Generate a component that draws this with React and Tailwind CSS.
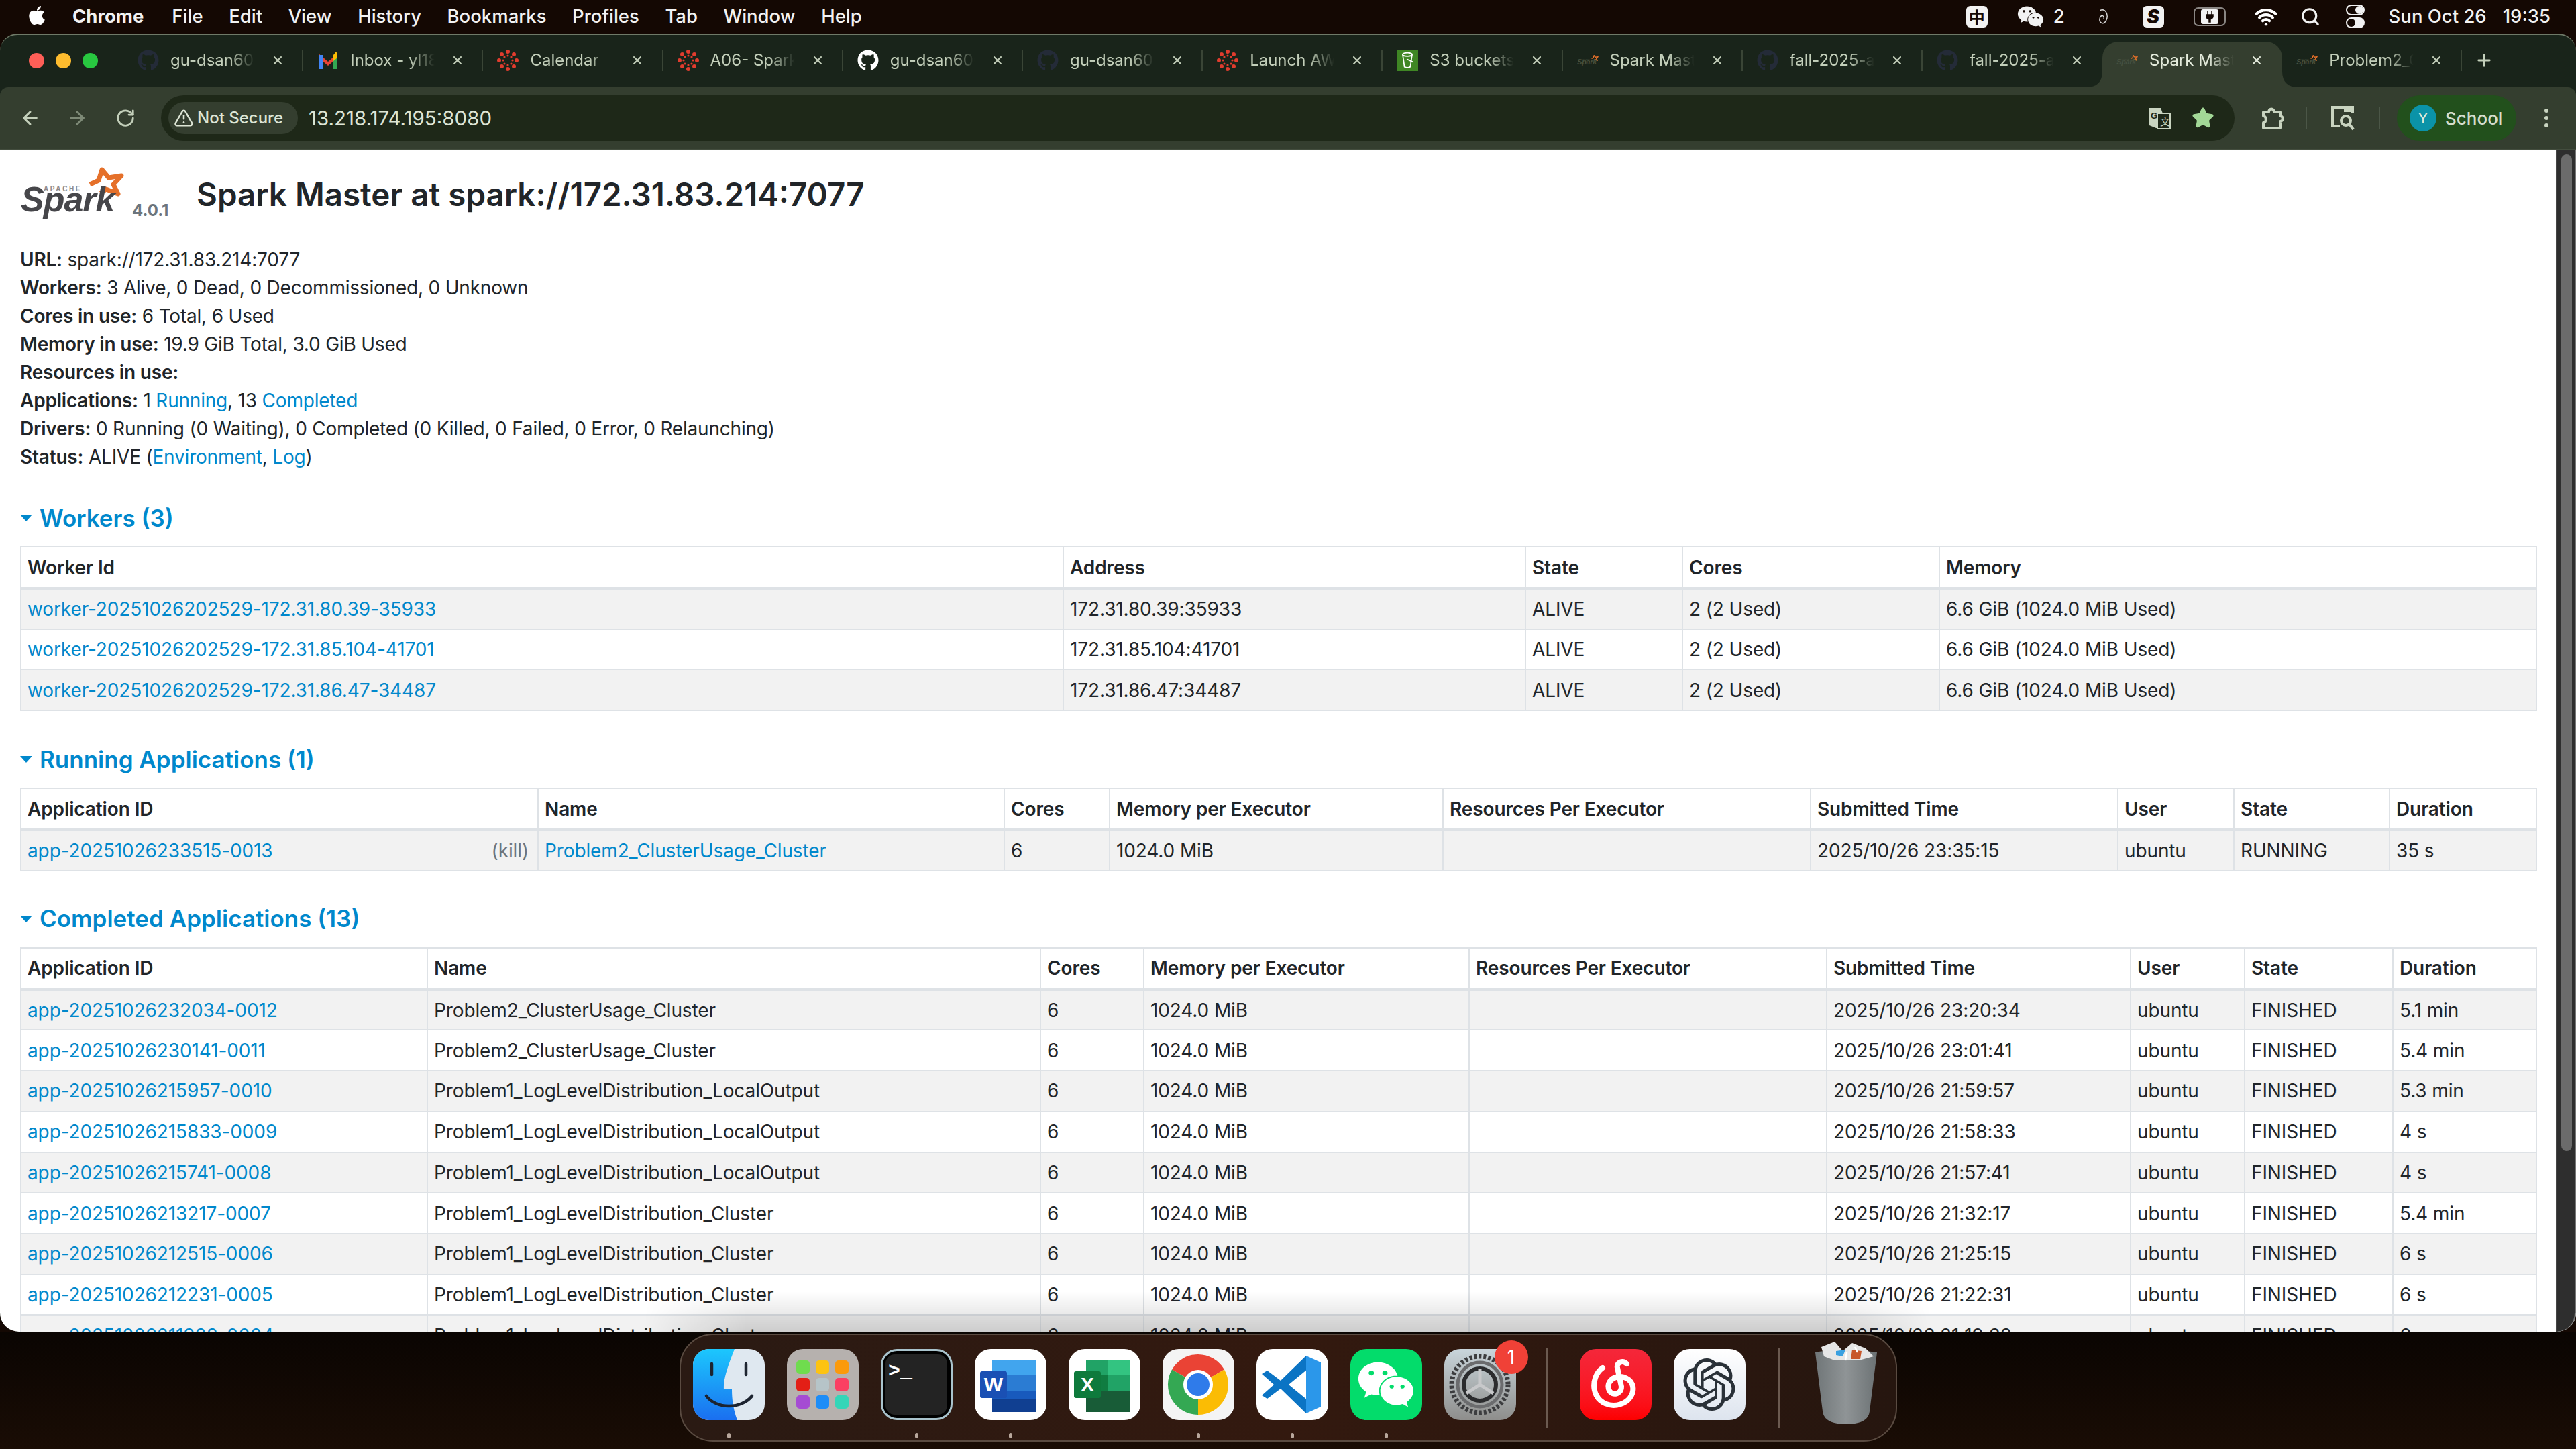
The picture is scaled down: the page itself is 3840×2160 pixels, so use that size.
import React from 'react';
import { ArrowLeft, ArrowRight, RotateCw, TriangleAlert, Star, Search, Plus, X, Wifi } from 'lucide-react';
import { FaApple, FaGithub, FaWeixin } from 'react-icons/fa';
import { SiOpenai } from 'react-icons/si';

const font = 'font-["Inter","Liberation_Sans",sans-serif]';

const SparkLogo = ({ className, dim }) => (
  <svg viewBox="0 0 155 80" className={className}>
    <path d="M104 27 L117 21 L122 5 L132 17 L151 14 L139 27 L146 41 L128 34 L120 40" fill="none" stroke="#e5702a" strokeWidth="7" strokeLinejoin="round" />
    <text x="35" y="37" fontFamily="Liberation Sans" fontWeight="700" fontSize="10" fill={dim ? '#46503f' : '#88898b'} letterSpacing="2.6">APACHE</text>
    <text x="1" y="67" fontFamily="Liberation Sans" fontStyle="italic" fontWeight="700" fontSize="52" fill={dim ? '#46503f' : '#46464a'} letterSpacing="-1">Spark</text>
  </svg>
);

const CanvasIcon = () => (
  <svg viewBox="0 0 32 32" className="w-[32px] h-[32px]">
    <g fill="#e13c2e">
      <circle cx="16" cy="3" r="3" /><circle cx="16" cy="29" r="3" /><circle cx="3" cy="16" r="3" /><circle cx="29" cy="16" r="3" />
      <circle cx="7" cy="7" r="3" /><circle cx="25" cy="7" r="3" /><circle cx="7" cy="25" r="3" /><circle cx="25" cy="25" r="3" />
      <circle cx="16" cy="9" r="1.6" /><circle cx="16" cy="23" r="1.6" /><circle cx="9" cy="16" r="1.6" /><circle cx="23" cy="16" r="1.6" />
      <circle cx="11" cy="11" r="1.6" /><circle cx="21" cy="11" r="1.6" /><circle cx="11" cy="21" r="1.6" /><circle cx="21" cy="21" r="1.6" />
    </g>
  </svg>
);

const GmailIcon = () => (
  <svg viewBox="0 0 32 32" className="w-[32px] h-[32px]">
    <path d="M2 6 L16 18 L30 6 V12 L16 24 L2 12 Z" fill="#ea4335" />
    <path d="M2 8 H8 V29 H2 Z" fill="#4285f4" />
    <path d="M24 8 H30 V29 H24 Z" fill="#34a853" />
    <path d="M24 8 L28 3 L30 6 V12 L24 17 Z" fill="#fbbc04" />
  </svg>
);

const S3Icon = () => (
  <div className="w-[32px] h-[32px] bg-[#3f8624] flex items-center justify-center">
    <svg viewBox="0 0 24 32" className="w-[22px] h-[28px]" fill="none" stroke="#fff" strokeWidth="2">
      <ellipse cx="12" cy="6" rx="8" ry="3" />
      <path d="M4 6 L7 27 Q12 30 17 27 L20 6" />
      <path d="M11 14 L22 19" />
    </svg>
  </div>
);

const Favicon = ({ type }) => {
  if (type === 'github') return <FaGithub className="w-[32px] h-[32px] text-[#242b38]" />;
  if (type === 'githubw') return <FaGithub className="w-[32px] h-[32px] text-white" />;
  if (type === 'gmail') return <GmailIcon />;
  if (type === 'canvas') return <CanvasIcon />;
  if (type === 's3') return <S3Icon />;
  return <SparkLogo className="w-[34px] h-[32px]" dim />;
};

const tabs = [
  { icon: 'github', title: 'gu-dsan6000' },
  { icon: 'gmail', title: 'Inbox - yl1883' },
  { icon: 'canvas', title: 'Calendar' },
  { icon: 'canvas', title: 'A06- Spark' },
  { icon: 'githubw', title: 'gu-dsan6000' },
  { icon: 'github', title: 'gu-dsan6000' },
  { icon: 'canvas', title: 'Launch AWS' },
  { icon: 's3', title: 'S3 buckets' },
  { icon: 'spark', title: 'Spark Master' },
  { icon: 'github', title: 'fall-2025-a06' },
  { icon: 'github', title: 'fall-2025-a06' },
  { icon: 'spark', title: 'Spark Master', active: true },
  { icon: 'spark', title: 'Problem2_Cluster' },
];

const Tab = ({ tab, hideSep }) => (
  <div className={`relative h-[68px] w-[268.2px] shrink-0 flex items-center pl-[21px] pb-[12px] ${tab.active ? 'bg-[#343e2f] rounded-t-[24px] z-10' : ''}`}>
    {tab.active && (
      <>
        <svg viewBox="0 0 24 24" className="absolute left-[-24px] bottom-0 w-[24px] h-[24px]"><path d="M24 0 V24 H0 Q24 24 24 0 Z" fill="#343e2f" /></svg>
        <svg viewBox="0 0 24 24" className="absolute right-[-24px] bottom-0 w-[24px] h-[24px]"><path d="M0 0 V24 H24 Q0 24 0 0 Z" fill="#343e2f" /></svg>
      </>
    )}
    <div className="w-[32px] h-[32px] shrink-0 flex items-center justify-center"><Favicon type={tab.icon} /></div>
    <span className={`ml-[17px] w-[126px] overflow-hidden whitespace-nowrap text-[24px] leading-[32px] [mask-image:linear-gradient(to_right,black_70%,transparent)] ${tab.active ? 'text-[#e4ebdc]' : 'text-[#c3cfba]'}`}>{tab.title}</span>
    <X className={`ml-[24px] w-[20px] h-[20px] shrink-0 ${tab.active ? 'text-[#e4ebdc]' : 'text-[#c3cfba]'}`} strokeWidth={2.5} />
    {!tab.active && !hideSep && <div className="absolute right-0 top-[12px] w-[2px] h-[32px] bg-[#3a4536]" />}
  </div>
);

const TabStrip = () => (
  <div className="h-[78px] flex items-end relative">
    <div className="flex items-center gap-[17px] pl-[43px] w-[184px] shrink-0 h-[68px] pb-[12px]">
      <div className="w-[23px] h-[23px] rounded-full bg-[#fe5f57]" />
      <div className="w-[23px] h-[23px] rounded-full bg-[#febc2e]" />
      <div className="w-[23px] h-[23px] rounded-full bg-[#28c840]" />
    </div>
    {tabs.map((tab, i) => (
      <Tab key={i} tab={tab} hideSep={i === 10} />
    ))}
    <div className="h-[68px] pb-[12px] flex items-center pl-[19px]">
      <Plus className="w-[28px] h-[28px] text-[#c3cfba]" strokeWidth={2.5} />
    </div>
  </div>
);

const TranslateIcon = () => (
  <svg viewBox="0 0 34 34" className="w-[34px] h-[34px]">
    <path d="M2 2 H19 L30 32 H12 L2 28 Z" fill="#c9d4c0" />
    <rect x="14" y="10" width="19" height="23" fill="#1e2818" stroke="#c9d4c0" strokeWidth="2" />
    <text x="4" y="18" fontSize="13" fontWeight="700" fontFamily="Liberation Sans" fill="#1e2818">G</text>
    <text x="18" y="28" fontSize="15" fontFamily="Noto Sans CJK SC" fill="#c9d4c0">文</text>
  </svg>
);

const PuzzleIcon = () => (
  <svg viewBox="0 0 34 34" className="w-[34px] h-[36px]" fill="none" stroke="#c9d4c0" strokeWidth="4" strokeLinejoin="round">
    <path d="M4 8 H12 C12 2 20 2 20 8 H29 V14 C34 14 34 22 29 22 V32 H4 V24 C9 24 9 14 4 14 Z" />
  </svg>
);

const LensIcon = () => (
  <svg viewBox="0 0 36 38" className="w-[36px] h-[38px]" fill="none" stroke="#c9d4c0" strokeWidth="4">
    <path d="M14 31 H3 V3 H33 V12" />
    <path d="M20 4 H33 V10 H20 Z" fill="#c9d4c0" stroke="none" />
    <circle cx="23" cy="23" r="7" />
    <path d="M28 28 L34 36" />
  </svg>
);

const Toolbar = () => (
  <div className="h-[92px] shrink-0 bg-[#343e2f] rounded-t-[12px] flex items-center text-[#c9d4c0]">
    <ArrowLeft className="ml-[29px] w-[32px] h-[32px] text-[#c3cfba]" strokeWidth={2.2} />
    <ArrowRight className="ml-[38px] w-[32px] h-[32px] text-[#7e8a77]" strokeWidth={2.2} />
    <RotateCw className="ml-[41px] w-[30px] h-[30px] text-[#c3cfba]" strokeWidth={2.2} />
    <div className="ml-[38px] w-[3091px] shrink-0 h-[68px] rounded-full bg-[#1e2818] flex items-center pl-[11px] pr-[30px]">
      <div className="h-[48px] w-[193px] rounded-full bg-[#343e2f] flex items-center pl-[8px] gap-[5px] shrink-0">
        <TriangleAlert className="w-[30px] h-[30px] text-[#dde5d5]" strokeWidth={2} />
        <span className="text-[24px] font-medium text-[#dde5d5] whitespace-nowrap">Not Secure</span>
      </div>
      <span className="ml-[16px] text-[29.5px] text-[#dde5d5]">13.218.174.195:8080</span>
      <div className="ml-auto flex items-center gap-[31px]">
        <TranslateIcon />
        <Star className="w-[34px] h-[34px] text-[#a3d897] fill-[#a3d897]" />
      </div>
    </div>
    <div className="ml-[39px] shrink-0"><PuzzleIcon /></div>
    <div className="ml-[33px] w-[2px] h-[32px] bg-[#4b5647] shrink-0" />
    <div className="ml-[35px] shrink-0"><LensIcon /></div>
    <div className="ml-[36px] w-[2px] h-[32px] bg-[#4b5647] shrink-0" />
    <div className="ml-[25px] h-[68px] w-[178px] shrink-0 rounded-full bg-[#22501c] flex items-center pl-[19px]">
      <div className="w-[40px] h-[40px] rounded-full bg-[#0b93a8] flex items-center justify-center text-[22px] text-[#e4ebdc]">Y</div>
      <span className="ml-[13px] text-[26px] font-medium text-[#d5ddcc]">School</span>
    </div>
    <div className="ml-[42px] flex flex-col gap-[5px] shrink-0">
      <div className="w-[6px] h-[6px] rounded-full bg-[#c9d4c0]" />
      <div className="w-[6px] h-[6px] rounded-full bg-[#c9d4c0]" />
      <div className="w-[6px] h-[6px] rounded-full bg-[#c9d4c0]" />
    </div>
  </div>
);

const menus = ['File', 'Edit', 'View', 'History', 'Bookmarks', 'Profiles', 'Tab', 'Window', 'Help'];

const MenuBar = () => (
  <div className="h-[50px] shrink-0 bg-[#140803] flex items-center text-[#f2f2f2] text-[27.5px] font-medium pl-[40px] pr-[38px]">
    <FaApple className="w-[30px] h-[32px] text-white mb-[4px]" />
    <span className="ml-[38px] font-bold">Chrome</span>
    <div className="ml-[42px] flex gap-[38.6px]">
      {menus.map((m) => <span key={m}>{m}</span>)}
    </div>
    <div className="ml-auto flex items-center">
      <div className="w-[32px] h-[32px] rounded-[6px] bg-[#f2f2f2] flex items-center justify-center text-[#140803] text-[24px] font-bold font-['Noto_Sans_CJK_SC']">中</div>
      <FaWeixin className="ml-[44px] w-[40px] h-[36px] text-[#f2f2f2]" />
      <span className="ml-[14px]">2</span>
      <svg viewBox="0 0 24 32" className="ml-[44px] w-[24px] h-[30px]" fill="none" stroke="#ddd" strokeWidth="1.5">
        <path d="M8 6 C18 2 22 14 18 22 C14 30 6 26 8 18 C10 12 16 14 14 20" />
      </svg>
      <div className="ml-[48px] w-[32px] h-[32px] rounded-[6px] bg-[#f2f2f2] flex items-center justify-center text-[#140803] text-[28px] font-black italic">S</div>
      <div className="ml-[44px] w-[48px] h-[28px] rounded-[7px] border-2 border-[#8a8683] flex items-center justify-center">
        <div className="w-[26px] h-[22px] rounded-[3px] bg-[#f2f2f2] flex items-center justify-center">
          <svg viewBox="0 0 12 16" className="w-[12px] h-[20px]"><path d="M3 0 V5 M9 0 V5 M1 5 H11 V8 C11 11 8 11 7 12 V16 H5 V12 C4 11 1 11 1 8 Z" stroke="#140803" strokeWidth="1.5" fill="#140803" /></svg>
        </div>
      </div>
      <Wifi className="ml-[42px] w-[36px] h-[34px] text-white" strokeWidth={3} />
      <Search className="ml-[33px] w-[30px] h-[30px] text-[#f2f2f2]" strokeWidth={2.5} />
      <div className="ml-[38px] w-[28px] h-[36px] flex flex-col gap-[3px]">
        <div className="h-[16px] rounded-full border-2 border-[#f2f2f2] flex justify-end"><div className="w-[12px] bg-[#f2f2f2] rounded-full" /></div>
        <div className="h-[16px] rounded-full bg-[#f2f2f2] flex"><div className="w-[12px] h-[12px] m-[2px] bg-[#140803] rounded-full" /></div>
      </div>
      <span className="ml-[36px] whitespace-nowrap">Sun Oct 26</span>
      <span className="ml-[24px]">19:35</span>
    </div>
  </div>
);

const A = ({ children }) => <a className="text-[#0088cc]">{children}</a>;

const info = [
  ['URL:', 'spark://172.31.83.214:7077'],
  ['Workers:', '3 Alive, 0 Dead, 0 Decommissioned, 0 Unknown'],
  ['Cores in use:', '6 Total, 6 Used'],
  ['Memory in use:', '19.9 GiB Total, 3.0 GiB Used'],
  ['Resources in use:', ''],
  ['Applications:', <>1 <A>Running</A>, 13 <A>Completed</A></>],
  ['Drivers:', '0 Running (0 Waiting), 0 Completed (0 Killed, 0 Failed, 0 Error, 0 Relaunching)'],
  ['Status:', <>ALIVE (<A>Environment</A>, <A>Log</A>)</>],
];

const Section = ({ title, className, children }) => (
  <section className={className}>
    <h4 className="h-[50px] flex items-center text-[#0088cc] text-[35px] font-semibold leading-none mb-[17px]">
      <svg viewBox="0 0 18 10" className="w-[18px] h-[10px] mr-[11px]"><path d="M0 0 H18 L9 10 Z" fill="#0088cc" /></svg>
      {title}
    </h4>
    {children}
  </section>
);

const Table = ({ widths, headers, rows }) => (
  <table className="w-[3750px] table-fixed border-collapse border-2 border-[#dee2e6] text-[28px] leading-[42px] tracking-[-0.12px] text-[#212529]">
    <colgroup>
      {widths.map((w, i) => <col key={i} style={{ width: w }} />)}
    </colgroup>
    <thead>
      <tr className="h-[62px] border-b-[4px] border-[#dee2e6]">
        {headers.map((h) => <th key={h} className="px-[9px] text-left font-semibold border-x-2 border-[#dee2e6]">{h}</th>)}
      </tr>
    </thead>
    <tbody>
      {rows.map((row, i) => (
        <tr key={i} className={`h-[60.7px] border-b-2 border-[#dee2e6] ${i % 2 === 0 ? 'bg-[#f2f2f2]' : 'bg-white'}`}>
          {row.map((c, j) => <td key={j} className="px-[9px] whitespace-nowrap overflow-hidden border-x-2 border-[#dee2e6]">{c}</td>)}
        </tr>
      ))}
    </tbody>
  </table>
);

const workerRows = [
  ['worker-20251026202529-172.31.80.39-35933', '172.31.80.39:35933'],
  ['worker-20251026202529-172.31.85.104-41701', '172.31.85.104:41701'],
  ['worker-20251026202529-172.31.86.47-34487', '172.31.86.47:34487'],
].map(([id, addr]) => [<A>{id}</A>, addr, 'ALIVE', '2 (2 Used)', '6.6 GiB (1024.0 MiB Used)']);

const completed = [
  ['app-20251026232034-0012', 'Problem2_ClusterUsage_Cluster', '2025/10/26 23:20:34', '5.1 min'],
  ['app-20251026230141-0011', 'Problem2_ClusterUsage_Cluster', '2025/10/26 23:01:41', '5.4 min'],
  ['app-20251026215957-0010', 'Problem1_LogLevelDistribution_LocalOutput', '2025/10/26 21:59:57', '5.3 min'],
  ['app-20251026215833-0009', 'Problem1_LogLevelDistribution_LocalOutput', '2025/10/26 21:58:33', '4 s'],
  ['app-20251026215741-0008', 'Problem1_LogLevelDistribution_LocalOutput', '2025/10/26 21:57:41', '4 s'],
  ['app-20251026213217-0007', 'Problem1_LogLevelDistribution_Cluster', '2025/10/26 21:32:17', '5.4 min'],
  ['app-20251026212515-0006', 'Problem1_LogLevelDistribution_Cluster', '2025/10/26 21:25:15', '6 s'],
  ['app-20251026212231-0005', 'Problem1_LogLevelDistribution_Cluster', '2025/10/26 21:22:31', '6 s'],
  ['app-20251026211933-0004', 'Problem1_LogLevelDistribution_Cluster', '2025/10/26 21:19:33', '6 s'],
].map(([id, name, time, dur]) => [<A>{id}</A>, name, '6', '1024.0 MiB', '', time, 'ubuntu', 'FINISHED', dur]);

const appHeaders = ['Application ID', 'Name', 'Cores', 'Memory per Executor', 'Resources Per Executor', 'Submitted Time', 'User', 'State', 'Duration'];

const Page = () => (
  <div className="relative flex-1 bg-white overflow-hidden rounded-b-[28px] pl-[30px] text-[#212529]">
    <div className="h-[142px] flex relative">
      <SparkLogo className="w-[155px] h-[80px] mt-[24px] shrink-0" />
      <span className="mt-[76px] ml-[12px] w-[60px] text-[24px] font-bold text-[#6c757d] leading-[28px]">4.0.1</span>
      <h3 className="ml-[36px] mt-[36px] text-[47.5px] font-semibold leading-[60px] whitespace-nowrap">Spark Master at spark://172.31.83.214:7077</h3>
    </div>
    <ul className="text-[28px] leading-[42px] tracking-[-0.2px]">
      {info.map(([k, v]) => (
        <li key={k}><strong className="font-semibold">{k}</strong> {v}</li>
      ))}
    </ul>
    <Section title="Workers (3)" className="mt-[45px]">
      <Table widths={[1554, 689, 234, 383, 890]} headers={['Worker Id', 'Address', 'State', 'Cores', 'Memory']} rows={workerRows} />
    </Section>
    <Section title="Running Applications (1)" className="mt-[47px]">
      <Table
        widths={[771, 695, 157, 497, 548, 458, 173, 232, 219]}
        headers={appHeaders}
        rows={[[
          <div className="flex justify-between"><A>app-20251026233515-0013</A><span className="text-[#6c757d] pr-[4px]">(kill)</span></div>,
          <A>Problem2_ClusterUsage_Cluster</A>, '6', '1024.0 MiB', '', '2025/10/26 23:35:15', 'ubuntu', 'RUNNING', '35 s',
        ]]}
      />
    </Section>
    <Section title="Completed Applications (13)" className="mt-[46px]">
      <Table widths={[606, 914, 154, 485, 533, 453, 170, 221, 214]} headers={appHeaders} rows={completed} />
    </Section>
    <div className="absolute right-0 top-0 bottom-0 w-[30px] bg-[#2e2e2e] border-l-2 border-r-2 border-l-[#444444] border-r-[#777777] rounded-br-[28px]">
      <div className="absolute left-[6px] top-[6px] w-[16px] h-[1486px] rounded-full bg-[#6b6b6b]" />
    </div>
    <div className="absolute left-[960px] w-[1920px] bottom-0 h-[60px] bg-gradient-to-b from-transparent to-black/15 [mask-image:linear-gradient(to_right,transparent,black_8%,black_92%,transparent)]" />
  </div>
);

const Tile = ({ className, children }) => (
  <div className={`relative w-[107px] h-[106px] rounded-[24px] overflow-hidden flex items-center justify-center shrink-0 ${className}`}>{children}</div>
);

const DockIcons = {
  finder: (
    <Tile className="bg-[#dfe8f0]">
      <svg viewBox="0 0 107 106" className="w-full h-full">
        <defs><linearGradient id="fb" x1="0" y1="0" x2="0" y2="1"><stop offset="0" stopColor="#1cc7fd" /><stop offset="1" stopColor="#1a6ff0" /></linearGradient></defs>
        <path d="M0 0 H62 C52 25 45 45 46 60 H58 C58 75 60 90 66 106 H0 Z" fill="url(#fb)" />
        <path d="M28 22 V38 M79 22 V38" stroke="#1d2430" strokeWidth="4.5" strokeLinecap="round" />
        <path d="M20 70 C35 90 72 90 88 70" fill="none" stroke="#1d2430" strokeWidth="4.5" strokeLinecap="round" />
      </svg>
    </Tile>
  ),
  launchpad: (
    <Tile className="bg-[#b6b1ae]">
      <div className="grid grid-cols-3 gap-x-[9px] gap-y-[6px]">
        {['bg-[#6fdc4e]', 'bg-[#fdc312]', 'bg-[#fb9a0b]', 'bg-[#e31f16]', 'bg-[#b6c4c8]', 'bg-[#fb3f62]', 'bg-[#a54bd3]', 'bg-[#1d8df7]', 'bg-[#34d6b8]'].map((c) => (
          <div key={c} className={`w-[20px] h-[20px] rounded-[5px] ${c}`} />
        ))}
      </div>
    </Tile>
  ),
  terminal: (
    <Tile className="bg-black border-[3px] border-[#a9c3cc]">
      <div className="w-[92px] h-[90px] rounded-[14px] bg-[#232323] text-white text-[30px] leading-[30px] pl-[4px] pt-[10px] font-['Liberation_Mono'] font-bold">&gt;_</div>
    </Tile>
  ),
  word: (
    <Tile className="bg-white">
      <svg viewBox="0 0 107 106" className="w-full h-full">
        <rect x="26" y="16" width="65" height="22" fill="#41a5ee" /><rect x="26" y="38" width="65" height="24" fill="#2b7cd3" />
        <rect x="26" y="62" width="65" height="12" fill="#185abd" /><rect x="26" y="74" width="65" height="20" fill="#103f91" />
        <rect x="8" y="33" width="40" height="40" rx="3" fill="#1a50b4" />
        <text x="28" y="63" textAnchor="middle" fontFamily="Liberation Sans" fontSize="30" fontWeight="700" fill="#fff">W</text>
      </svg>
    </Tile>
  ),
  excel: (
    <Tile className="bg-white">
      <svg viewBox="0 0 107 106" className="w-full h-full">
        <rect x="26" y="16" width="32" height="22" fill="#21a366" /><rect x="58" y="16" width="33" height="22" fill="#33c481" />
        <rect x="26" y="38" width="32" height="24" fill="#107c41" /><rect x="58" y="38" width="33" height="24" fill="#21a366" />
        <rect x="26" y="62" width="65" height="32" fill="#185c37" />
        <rect x="8" y="33" width="40" height="40" rx="3" fill="#0e7a3c" />
        <text x="28" y="63" textAnchor="middle" fontFamily="Liberation Sans" fontSize="30" fontWeight="700" fill="#fff">X</text>
      </svg>
    </Tile>
  ),
  chrome: (
    <Tile className="bg-[#f4f4f4]">
      <svg viewBox="0 0 107 106" className="w-full h-full">
        <path d="M53 53 L14 30.5 A45 45 0 0 1 92 30.5 Z" fill="#ea4335" />
        <path d="M53 53 L53 98 A45 45 0 0 1 14 30.5 Z" fill="#34a853" />
        <path d="M53 53 L92 30.5 A45 45 0 0 1 53 98 Z" fill="#fbbc04" />
        <circle cx="53" cy="53" r="22" fill="#fff" /><circle cx="53" cy="53" r="17" fill="#2f7bea" />
      </svg>
    </Tile>
  ),
  vscode: (
    <Tile className="bg-white">
      <svg viewBox="0 0 107 106" className="w-full h-full">
        <path d="M74 10 L36 47 L16 32 L8 37 L26 53 L8 69 L16 74 L36 59 L74 96 L76 76 L48 53 L76 30 Z" fill="#0b74c4" />
        <path d="M74 10 L96 20 V86 L74 96 Z" fill="#2b97ea" />
      </svg>
    </Tile>
  ),
  wechat: (
    <Tile className="bg-[#03dc6b]"><FaWeixin className="w-[86px] h-[78px] text-white" /></Tile>
  ),
  settings: (
    <div className="relative w-[107px] h-[106px] shrink-0">
      <Tile className="bg-gradient-to-b from-[#c9d5db] to-[#8e8e8c]">
        <svg viewBox="0 0 107 106" className="w-full h-full" fill="none">
          <circle cx="53" cy="53" r="42" stroke="#3c3d3f" strokeWidth="7" strokeDasharray="4 3" />
          <circle cx="53" cy="53" r="33" stroke="#6b6c6e" strokeWidth="5" />
          <circle cx="53" cy="53" r="24" stroke="#2b2c2e" strokeWidth="6" />
          <path d="M53 53 V30 M53 53 L33 66 M53 53 L73 66" stroke="#c7c8ca" strokeWidth="5" />
        </svg>
      </Tile>
      <div className="absolute right-[-18px] top-[-13px] w-[50px] h-[50px] rounded-full bg-[#f04137] flex items-center justify-center text-white text-[28px]">1</div>
    </div>
  ),
  netease: (
    <Tile className="bg-gradient-to-b from-[#f4273a] to-[#fd0000]">
      <svg viewBox="0 0 107 106" className="w-full h-full" fill="none" stroke="#fff" strokeWidth="8" strokeLinecap="round">
        <path d="M34 28 C14 42 16 82 50 84 C80 84 90 50 66 42 C50 38 38 50 44 62 C48 70 62 68 62 56 L56 28 C54 20 64 16 70 22" />
      </svg>
    </Tile>
  ),
  chatgpt: (
    <Tile className="bg-gradient-to-b from-white to-[#dde4ee]"><SiOpenai className="w-[78px] h-[78px] text-[#2a3138]" /></Tile>
  ),
};

const DockSep = () => <div className="w-[2px] h-[118px] bg-[#6b5a50] shrink-0" />;

const dockItems = [
  ['finder', true], ['launchpad', false], ['terminal', true], ['word', true], ['excel', false],
  ['chrome', true], ['vscode', true], ['wechat', true], ['settings', false],
];

const DockSlot = ({ name, dot }) => (
  <div className="relative w-[107px] h-[106px] shrink-0">
    {DockIcons[name]}
    {dot && <div className="absolute left-[51px] top-[125px] w-[5px] h-[8px] rounded-full bg-[#b8a79c]" />}
  </div>
);

const TrashIcon = () => (
  <svg viewBox="0 0 94 122" className="ml-[19px] mt-[-11px] w-[94px] h-[122px] shrink-0">
    <defs>
      <linearGradient id="tr" x1="0" y1="0" x2="1" y2="0">
        <stop offset="0" stopColor="#707678" /><stop offset="0.5" stopColor="#8f9496" /><stop offset="1" stopColor="#6c7274" />
      </linearGradient>
    </defs>
    <path d="M1 16 Q47 8 93 16 L82 104 Q80 119 60 122 H34 Q14 119 12 104 Z" fill="url(#tr)" />
    <path d="M10 8 L30 0 L42 14 L56 2 L76 10 L88 22 L66 28 L30 28 L14 22 Z" fill="#e6e6e6" />
    <path d="M32 14 L46 12 L42 22 L32 20 Z" fill="#3aa0e0" />
    <path d="M56 12 L70 14 L68 26 L54 26 Z" fill="#c8572a" />
    <path d="M48 16 L46 28 M60 8 L64 16" stroke="#fff" strokeWidth="2.5" />
  </svg>
);

const Dock = () => (
  <div className="flex-1 flex justify-center bg-gradient-to-b from-[#0a0502] to-[#1a0d05]">
    <div className="mt-[3px] w-[1815px] h-[161px] rounded-[50px] border-2 border-[#5a4b41] bg-gradient-to-r from-[#2a1a13] via-[#33190f] to-[#26160f] flex items-start pt-[21px] pl-[18px] gap-[33px]">
      {dockItems.map(([name, dot]) => <DockSlot key={name} name={name} dot={dot} />)}
      <div className="ml-[12px] mt-[-1px]"><DockSep /></div>
      <div className="ml-[15px] flex gap-[33px]">
        <DockSlot name="netease" />
        <DockSlot name="chatgpt" />
      </div>
      <div className="ml-[16px] mt-[-1px]"><DockSep /></div>
      <TrashIcon />
    </div>
  </div>
);

export default function App() {
  return (
    <div className={`relative w-[3840px] h-[2160px] overflow-hidden bg-[#140803] flex flex-col ${font}`}>
      <MenuBar />
      <div className="h-[1935px] shrink-0 flex flex-col rounded-t-[26px] border-t-2 border-[#6f7a68] bg-[#19241a] rounded-b-[28px]">
        <TabStrip />
        <Toolbar />
        <div className="h-[2px] bg-[#434d3e] shrink-0" />
        <Page />
      </div>
      <Dock />
    </div>
  );
}
